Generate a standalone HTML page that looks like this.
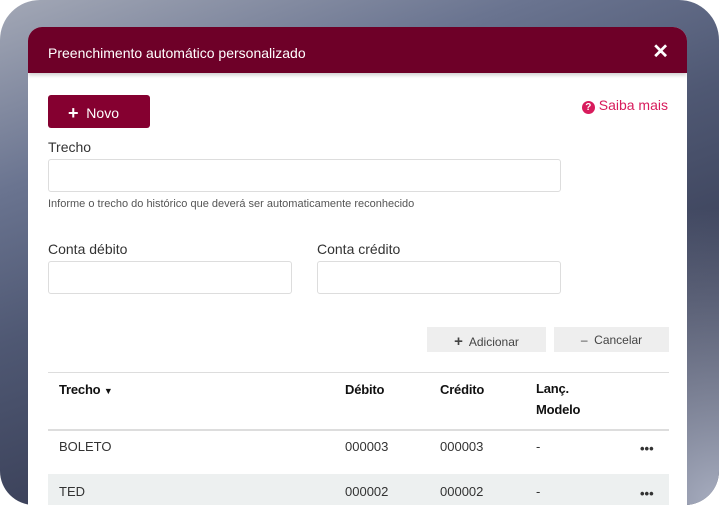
<!DOCTYPE html>
<html><head><meta charset="utf-8"><style>
*{margin:0;padding:0;box-sizing:border-box}
body{width:719px;height:505px;background:#fff;overflow:hidden;font-family:"Liberation Sans",sans-serif;position:relative}
.bg{position:absolute;left:0;top:0;width:719px;height:505px;border-radius:40px 40px 34px 34px;
background:linear-gradient(160deg,#a3a8b6 0%,#6a7490 25%,#4f5873 45%,#3a4058 70%,#262a40 100%);overflow:hidden}
.bg:after{content:"";position:absolute;right:0;bottom:0;width:300px;height:300px;background:radial-gradient(circle at 100% 100%,#a8aec0 0%,rgba(168,174,192,0) 70%)}
.modal{position:absolute;left:28px;top:27px;width:659px;height:478px;background:#fff;border-radius:14px 14px 0 0;overflow:hidden}
.hdr{height:46px;background:#6e0028;color:#fff;font-size:14px;padding:18px 0 0 20px;position:relative;box-shadow:0 2px 4px rgba(0,0,0,.2)}
.x{position:absolute;right:18px;top:12px;font-size:20px;font-weight:bold}
.abs{position:absolute}
.btn{left:20px;top:68px;width:102px;height:33px;background:#850030;border-radius:3px;color:#fff;font-size:14px;padding:8px 0 0 20px}
.lbl{font-size:14px;color:#333}
.inp{border:1px solid #ddd;border-radius:3px;height:33px;background:#fff}
.sbtn{background:#eee;font-size:12px;color:#444;height:25px;text-align:center;padding-top:6px}
.t{font-size:13px;color:#333}
.th{font-size:13px;color:#111;font-weight:bold;letter-spacing:-0.2px}
</style></head><body>
<div class="bg"></div>
<div class="modal">
<div class="hdr">Preenchimento automático personalizado<span class="x">✕</span></div>
<div class="abs btn"><b style="font-size:18px;vertical-align:-1px">+</b>&nbsp; Novo</div>
<div class="abs" style="right:19px;top:70px;color:#d81b5c;font-size:14px"><span style="display:inline-block;width:13px;height:13px;border-radius:50%;background:#d81b5c;color:#fff;font-size:10px;font-weight:bold;text-align:center;line-height:13px;vertical-align:0">?</span> Saiba mais</div>
<div class="abs lbl" style="left:20px;top:112px">Trecho</div>
<div class="abs inp" style="left:20px;top:132px;width:513px"></div>
<div class="abs" style="left:20px;top:171px;font-size:11px;color:#555">Informe o trecho do histórico que deverá ser automaticamente reconhecido</div>
<div class="abs lbl" style="left:20px;top:214px">Conta débito</div>
<div class="abs inp" style="left:20px;top:234px;width:244px"></div>
<div class="abs lbl" style="left:289px;top:214px">Conta crédito</div>
<div class="abs inp" style="left:289px;top:234px;width:244px"></div>
<div class="abs sbtn" style="left:399px;top:300px;width:119px"><b style="font-size:15px">+</b>&nbsp; Adicionar</div>
<div class="abs sbtn" style="left:526px;top:300px;width:115px">–&nbsp; Cancelar</div>
<div class="abs" style="left:20px;top:345px;width:621px;border-top:1px solid #ddd"></div>
<div class="abs th" style="left:31px;top:355px">Trecho <span style="font-size:9px">▼</span></div>
<div class="abs th" style="left:317px;top:355px">Débito</div>
<div class="abs th" style="left:412px;top:355px">Crédito</div>
<div class="abs th" style="left:508px;top:351px;line-height:21px">Lanç.<br>Modelo</div>
<div class="abs" style="left:20px;top:402px;width:621px;border-top:2px solid #ddd"></div>
<div class="abs t" style="left:31px;top:412px">BOLETO</div>
<div class="abs t" style="left:317px;top:412px">000003</div>
<div class="abs t" style="left:412px;top:412px">000003</div>
<div class="abs t" style="left:508px;top:412px">-</div>
<div class="abs t" style="left:612px;top:414px;font-weight:bold">•••</div>
<div class="abs" style="left:20px;top:447px;width:621px;height:31px;background:#edf0f0"></div>
<div class="abs t" style="left:31px;top:457px">TED</div>
<div class="abs t" style="left:317px;top:457px">000002</div>
<div class="abs t" style="left:412px;top:457px">000002</div>
<div class="abs t" style="left:508px;top:457px">-</div>
<div class="abs t" style="left:612px;top:459px;font-weight:bold">•••</div>
</div>
</body></html>
